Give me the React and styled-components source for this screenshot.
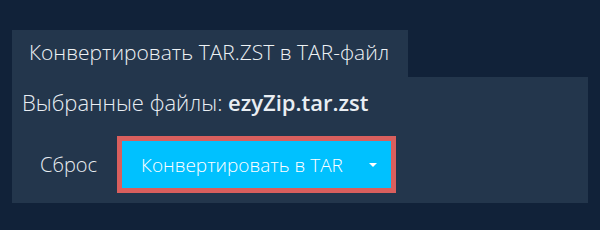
import React from "react"
import styled, { createGlobalStyle } from "styled-components"

const GlobalStyle = createGlobalStyle`
  html, body {
    margin: 0;
    padding: 0;
    background: #112239;
  }
  body {
    font-family: "Open Sans", "Noto Sans", sans-serif;
    color: #e9eef3;
  }
`

const Page = styled.div`
  width: 600px;
  height: 230px;
  padding: 30px 12px 0;
  box-sizing: border-box;
`

const Tab = styled.div`
  display: inline-flex;
  align-items: center;
  height: 47px;
  box-sizing: border-box;
  padding: 0 19px 4px 17px;
  background: #23364c;
  font-size: 21px;
  font-weight: 300;
  color: #eef2f5;
  white-space: nowrap;
`

const Panel = styled.div`
  background: #23364c;
  height: 126px;
  padding: 9px 10px 0;
  box-sizing: border-box;
`

const Selected = styled.div`
  font-size: 22px;
  font-weight: 300;
  line-height: 32px;
  white-space: nowrap;

  b {
    font-weight: 600;
  }
`

const Actions = styled.div`
  display: flex;
  align-items: center;
  margin-top: 18px;
`

const ResetButton = styled.button`
  background: none;
  border: none;
  color: #e9eef3;
  font-family: inherit;
  font-size: 20px;
  font-weight: 300;
  padding: 0 18px;
  margin-right: 2px;
  cursor: pointer;
`

const ConvertButton = styled.button`
  display: flex;
  align-items: center;
  width: 279px;
  height: 57px;
  box-sizing: border-box;
  border: 5px solid #d95f5d;
  background: #00c1ff;
  color: #ffffff;
  font-family: inherit;
  font-size: 19px;
  font-weight: 300;
  padding: 0 0 0 19px;
  white-space: nowrap;
  cursor: pointer;
`

const Label = styled.span`
  flex: 1;
  text-align: left;
`

const Caret = styled.span`
  width: 0;
  height: 0;
  border-left: 4px solid transparent;
  border-right: 4px solid transparent;
  border-top: 4px solid #ffffff;
  margin-right: 14px;
`

export default function App() {
  return (
    <>
      <GlobalStyle />
      <Page>
        <Tab>Конвертировать TAR.ZST в TAR-файл</Tab>
        <Panel>
          <Selected>
            Выбранные файлы: <b>ezyZip.tar.zst</b>
          </Selected>
          <Actions>
            <ResetButton>Сброс</ResetButton>
            <ConvertButton>
              <Label>Конвертировать в TAR</Label>
              <Caret />
            </ConvertButton>
          </Actions>
        </Panel>
      </Page>
    </>
  )
}
